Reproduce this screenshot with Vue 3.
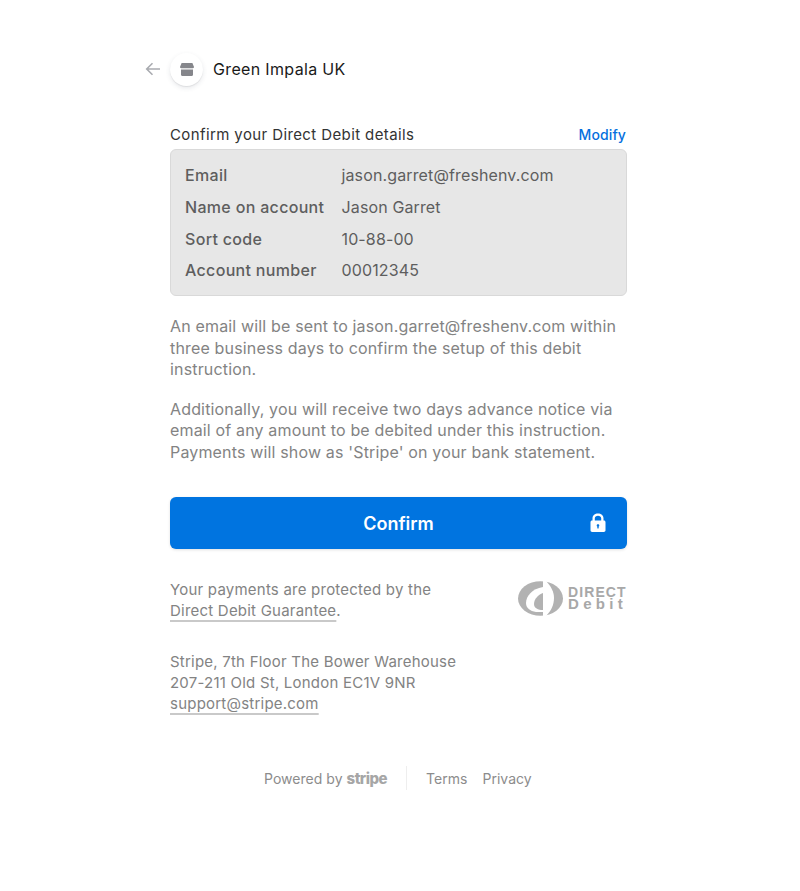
<script setup>
const rows = [
  ['Email', 'jason.garret@freshenv.com'],
  ['Name on account', 'Jason Garret'],
  ['Sort code', '10-88-00'],
  ['Account number', '00012345'],
]
</script>

<template>
  <div class="page">
    <header class="head">
      <svg class="back" width="16" height="14" viewBox="0 0 16 14" fill="none" stroke="#a9abb0" stroke-width="1.6">
        <path d="M15 7H2M7.500 1.200 1.700 7l5.800 5.800" />
      </svg>
      <div class="avatar">
        <svg width="16" height="15" viewBox="0 0 16 15" fill="#85868b">
          <path d="M2.600 1h10.800L15 5c0 .7-.5 1.200-1.200 1.200H2.200C1.500 6.200 1 5.700 1 5z" />
          <path d="M2 7.500h12v5.300c0 .7-.5 1.200-1.100 1.200H3.100C2.500 14 2 13.500 2 12.800z" />
        </svg>
      </div>
      <span class="merchant">Green Impala UK</span>
    </header>

    <main class="main">
      <div class="title-row">
        <span class="title">Confirm your Direct Debit details</span>
        <span class="modify">Modify</span>
      </div>
      <div class="details">
        <div v-for="r in rows" :key="r[0]" class="row">
          <span class="label">{{ r[0] }}</span>
          <span class="value">{{ r[1] }}</span>
        </div>
      </div>
      <p class="para first">An email will be sent to jason.garret@freshenv.com within three business days to confirm the setup of this debit instruction.</p>
      <p class="para second">Additionally, you will receive two days advance notice via email of any amount to be debited under this instruction. Payments will show as 'Stripe' on your bank statement.</p>

      <button class="confirm">
        <span>Confirm</span>
        <svg class="lock" width="16" height="20" viewBox="0 0 16 20">
          <path fill="#fff" fill-rule="evenodd" d="M2.500 7.500V5.300C2.500 2.400 5 .5 8 .5s5.500 1.900 5.500 4.800v2.200h.3c1 0 1.700.7 1.700 1.700v8.100c0 1-.7 1.700-1.700 1.700H2.200c-1 0-1.700-.7-1.700-1.700V9.200c0-1 .7-1.700 1.700-1.700zm2.300 0h6.400V5.300c0-1.500-1.400-2.600-3.200-2.600S4.800 3.800 4.800 5.300zM8 11.300c-.8 0-1.300.5-1.300 1.200 0 .5.300.9.600 1.100v1.300c0 .4.300.7.700.7s.7-.3.700-.7v-1.300c.3-.2.600-.6.600-1.100 0-.7-.5-1.200-1.300-1.200z" />
        </svg>
      </button>

      <div class="guarantee">
        <div class="small">Your payments are protected by the<br /><span class="link">Direct Debit Guarantee</span>.</div>
        <div class="dd">
          <svg width="46" height="35" viewBox="0 0 46 35">
            <ellipse cx="22.500" cy="17.500" rx="22.500" ry="17.300" fill="#b2b2b2" />
            <path d="M25 6C14 8 8 15 8 22c0 5 4 8 10 9h7z" fill="#fff" />
            <path d="M25 12c-5 2-9 6-9 11 0 4 4 6 9 6z" fill="#b2b2b2" />
            <path d="M25 0h3c5 5 8 11 8 17 0 7-3 13-8 18h-3z" fill="#fff" />
          </svg>
          <div class="dd-text">
            <span class="dd-top">DIRECT</span>
            <span class="dd-bottom">Debit</span>
          </div>
        </div>
      </div>

      <div class="small address">
        Stripe, 7th Floor The Bower Warehouse<br />
        207-211 Old St, London EC1V 9NR<br />
        <span class="link">support@stripe.com</span>
      </div>
    </main>

    <footer class="foot">
      <span class="powered">Powered by <b class="stripe">stripe</b></span>
      <span class="divider"></span>
      <span class="foot-link">Terms</span>
      <span class="foot-link">Privacy</span>
    </footer>
  </div>
</template>

<style>
html, body { background: #fff; }
</style>

<style scoped>
.page {
  width: 800px;
  height: 891px;
  box-sizing: border-box;
  padding-top: 52px;
  font-family: Inter, "Liberation Sans", sans-serif;
  color: #4f566b;
  background: #fff;
  overflow: hidden;
}
.head {
  display: flex;
  align-items: center;
  height: 34px;
  padding-left: 145px;
}
.back { margin-right: 9px; }
.avatar {
  width: 33px;
  height: 33px;
  border-radius: 50%;
  background: #fff;
  box-shadow: 0 2px 5px rgba(60, 66, 87, 0.12), 0 1px 1px rgba(0, 0, 0, 0.07);
  display: flex;
  align-items: center;
  justify-content: center;
}
.merchant {
  margin-left: 10px;
  font-size: 16px;
  font-weight: 400;
  letter-spacing: 0.34px;
  color: #1a1a1a;
}
.main { width: 457px; margin-left: 170px; margin-top: 38px; }
.title-row {
  display: flex;
  justify-content: space-between;
  align-items: center;
  height: 20px;
  font-size: 15px;
  font-weight: 400;
}
.title { color: #333; letter-spacing: 0.39px; }
.modify { color: #0570de; font-weight: 500; font-size: 14px; letter-spacing: 0.1px; margin-right: 1px; }
.details {
  margin-top: 5px;
  height: 147px;
  box-sizing: border-box;
  padding: 9.300px 14px;
  background: #e7e7e7;
  border: 1px solid #d9d9d9;
  border-radius: 6px;
}
.row {
  display: flex;
  align-items: center;
  height: 31.750px;
  font-size: 16px;
  color: #5e5e5e;
  letter-spacing: 0.13px;
}
.label { width: 156.500px; font-weight: 450; letter-spacing: 0.32px; }
.para {
  margin: 0;
  font-size: 16px;
  line-height: 21.500px;
  letter-spacing: 0.16px;
  color: #838383;
}
.first { margin-top: 20px; }
.second { margin-top: 18px; }
.confirm {
  position: relative;
  display: block;
  width: 457px;
  height: 52px;
  margin-top: 34px;
  border: 0;
  border-radius: 6px;
  background: #0074e0;
  color: #fff;
  font: 600 18px Inter, "Liberation Sans", sans-serif;
  box-shadow: 0 1px 3px rgba(0, 0, 0, 0.12);
}
.lock { position: absolute; right: 21px; top: 16px; }
.guarantee {
  display: flex;
  justify-content: space-between;
  align-items: center;
  margin-top: 30px;
}
.small {
  font-size: 15px;
  line-height: 21px;
  letter-spacing: 0.22px;
  color: #838383;
}
.link {
  text-decoration: underline;
  text-decoration-color: #c9c9c9;
  text-decoration-thickness: 1.500px;
  text-decoration-skip-ink: none;
  text-underline-offset: 4px;
}
.dd { display: flex; align-items: center; margin-top: -3px; }
.dd-text {
  display: flex;
  flex-direction: column;
  margin-left: 4px;
  width: 59px;
  color: #a8a8a8;
  font-family: "Liberation Sans", sans-serif;
  font-weight: 700;
}
.dd-top { font-size: 14px; line-height: 11px; letter-spacing: 1.100px; }
.dd-bottom { font-size: 15px; line-height: 12px; letter-spacing: 4.300px; }
.address { margin-top: 30px; }
.foot {
  display: flex;
  align-items: center;
  margin: 52px 0 0 264px;
  height: 24px;
  font-size: 14px;
  letter-spacing: 0.03px;
  color: #8c8c8c;
}
.stripe { font-weight: 800; font-size: 15px; color: #a6a6a6; letter-spacing: -0.5px; }
.divider { width: 1px; height: 24px; background: #eeeeee; margin: 0 19px 0 19px; }
.foot-link { margin-right: 15px; }
</style>
